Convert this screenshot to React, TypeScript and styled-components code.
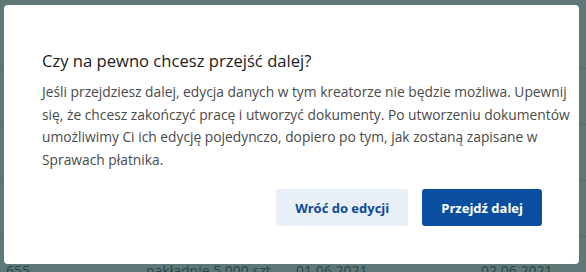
import React from "react";
import styled, { createGlobalStyle } from "styled-components";

const GlobalStyle = createGlobalStyle`
  html, body { margin: 0; padding: 0; background: #ffffff; }
  body { font-family: "Open Sans", "Noto Sans", sans-serif; overflow: hidden; }
  * { box-sizing: border-box; }
`;

const Page = styled.div`
  width: 586px;
  height: 272px;
  padding-top: 68px;
  overflow: hidden;
`;

const Row = styled.div`
  display: grid;
  grid-template-columns: 140px 150px 185px 111px;
  height: 56px;
  align-items: start;
  padding-top: 24px;
  border-top: 1px solid #c9d2d2;
  font-size: 14px;
  line-height: 20px;
  color: #333333;
`;

const Cell = styled.div`
  padding-left: 6px;
  white-space: nowrap;
`;

const Overlay = styled.div`
  position: fixed;
  inset: 0;
  background: rgba(40, 75, 75, 0.75);
  display: flex;
  align-items: flex-start;
  padding: 5px 7px 0 4px;
`;

const Modal = styled.div`
  width: 575px;
  height: 259px;
  background: #ffffff;
  border-radius: 4px;
  padding: 44px 37px 0 38px;
  display: flex;
  flex-direction: column;
`;

const Title = styled.h2`
  margin: 0;
  font-size: 16.6px;
  line-height: 24px;
  font-weight: 500;
  color: #1b1b1b;
`;

const Text = styled.p`
  margin: 8px -12px 0 0;
  font-size: 13.8px;
  line-height: 22.5px;
  color: #4a4a4a;
  white-space: nowrap;
`;

const Actions = styled.div`
  display: flex;
  justify-content: flex-end;
  gap: 14px;
  margin-top: 18px;
`;

const Button = styled.button<{ $primary?: boolean }>`
  height: 37px;
  padding: 0 19px;
  border: none;
  border-radius: 3px;
  font-family: "Open Sans", "Noto Sans", sans-serif;
  font-size: 13px;
  font-weight: 700;
  background: ${(p) => (p.$primary ? "#0a4f9f" : "#e8eff7")};
  color: ${(p) => (p.$primary ? "#ffffff" : "#0b4c98")};
  cursor: pointer;
`;

const rows = [
  ["", "", "", ""],
  ["3", "", "", ""],
  ["3", "", "", ""],
  ["655", "nakładnie 5 000 szt", "01.06.2021", "02.06.2021"],
];

export default function App() {
  return (
    <>
      <GlobalStyle />
      <Page>
        {rows.map((r, i) => (
          <Row key={i}>
            {r.map((c, j) => (
              <Cell key={j}>{c}</Cell>
            ))}
          </Row>
        ))}
      </Page>
      <Overlay>
        <Modal role="dialog">
          <Title>Czy na pewno chcesz przejść dalej?</Title>
          <Text>
            Jeśli przejdziesz dalej, edycja danych w tym kreatorze nie będzie możliwa. Upewnij
            <br />
            się, że chcesz zakończyć pracę i utworzyć dokumenty. Po utworzeniu dokumentów
            <br />
            umożliwimy Ci ich edycję pojedynczo, dopiero po tym, jak zostaną zapisane w
            <br />
            Sprawach płatnika.
          </Text>
          <Actions>
            <Button>Wróć do edycji</Button>
            <Button $primary>Przejdź dalej</Button>
          </Actions>
        </Modal>
      </Overlay>
    </>
  );
}
